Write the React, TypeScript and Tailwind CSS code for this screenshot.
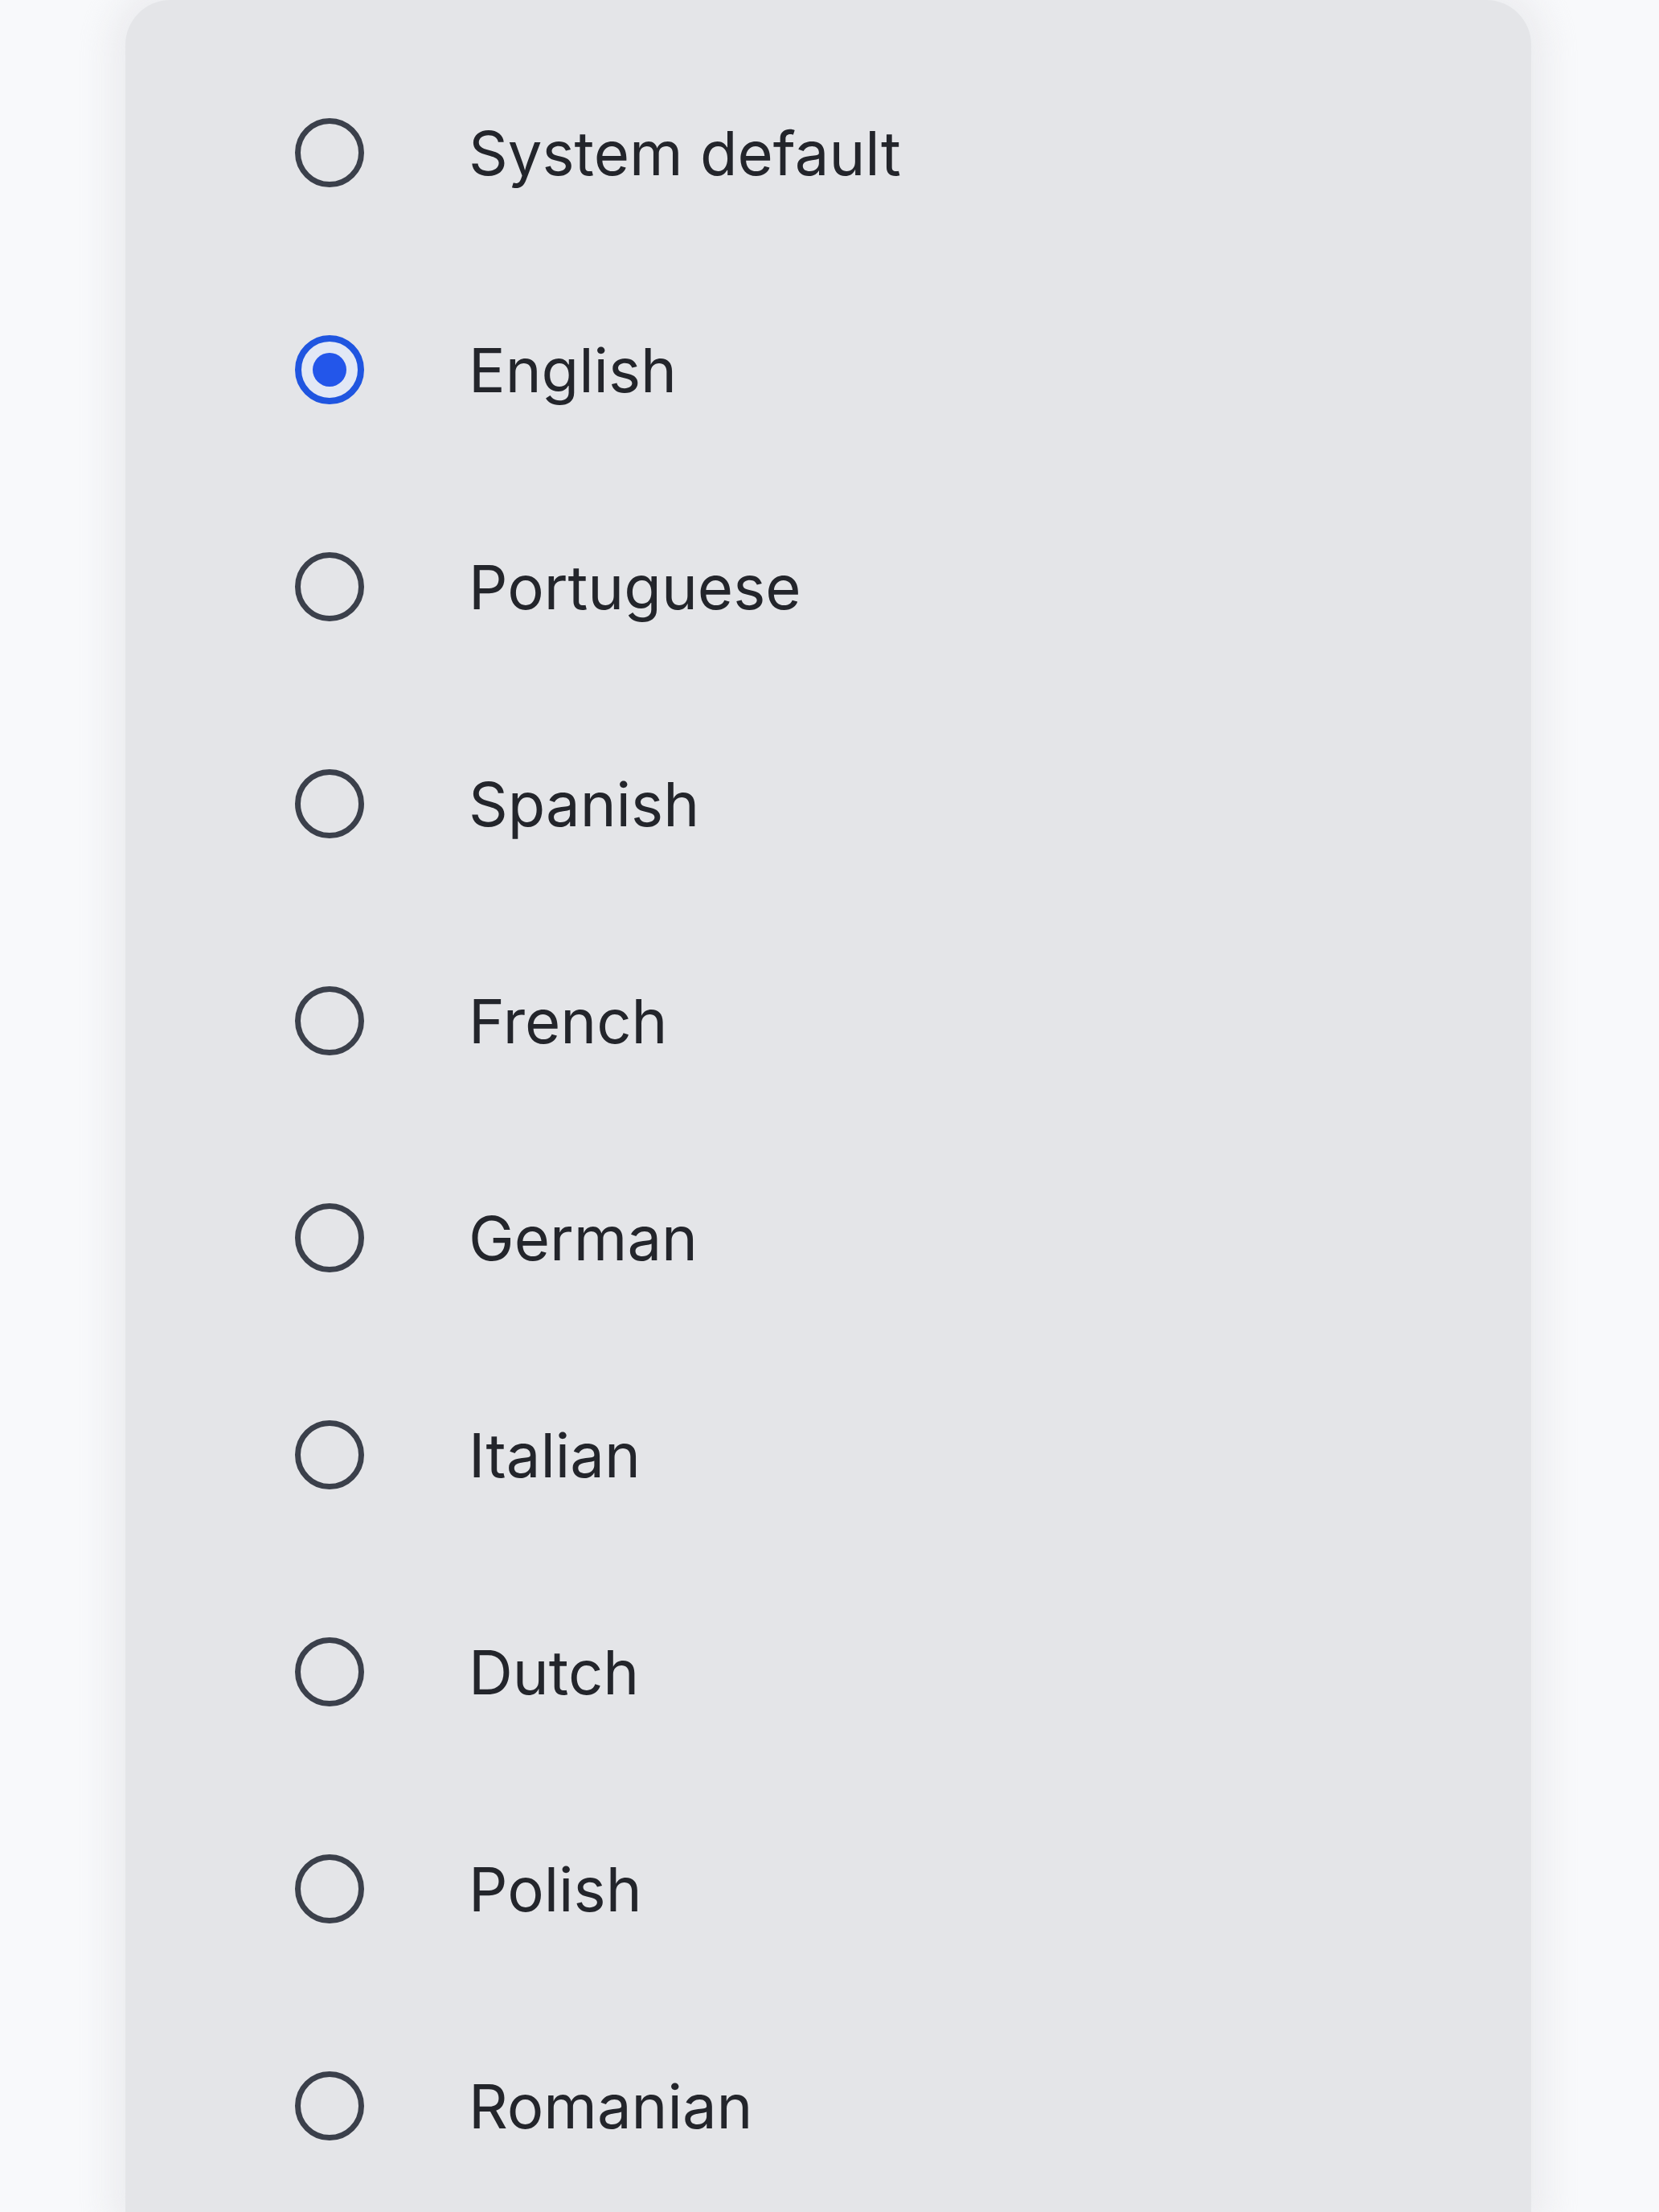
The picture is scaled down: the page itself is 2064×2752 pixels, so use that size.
const languages = [
  'System default',
  'English',
  'Portuguese',
  'Spanish',
  'French',
  'German',
  'Italian',
  'Dutch',
  'Polish',
  'Romanian',
];

function Radio({ checked }: { checked: boolean }) {
  if (checked) {
    return (
      <span className="flex h-[86px] w-[86px] shrink-0 items-center justify-center rounded-full border-[8px] border-[#1f55e0] bg-[#e2e8f5]">
        <span className="h-[42px] w-[42px] rounded-full bg-[#2356ea]" />
      </span>
    );
  }
  return <span className="h-[86px] w-[86px] shrink-0 rounded-full border-[7px] border-[#3b404b]" />;
}

export default function App() {
  return (
    <div
      className="min-h-[2752px] w-[2064px] overflow-hidden bg-[#f8f9fb] pl-[156px]"
      style={{ fontFamily: 'Inter, "Noto Sans", sans-serif' }}
    >
      <div className="h-[2752px] w-[1749px] rounded-t-[56px] bg-[#e4e5e8] pt-[55px] pl-[211px] shadow-[0_0_40px_20px_rgba(228,229,232,0.6)]">
        {languages.map((lang) => (
          <div key={lang} className="flex h-[270px] items-center gap-[130px]">
            <Radio checked={lang === 'English'} />
            <span className="text-[76px] leading-none text-[#23252b]">{lang}</span>
          </div>
        ))}
      </div>
    </div>
  );
}
